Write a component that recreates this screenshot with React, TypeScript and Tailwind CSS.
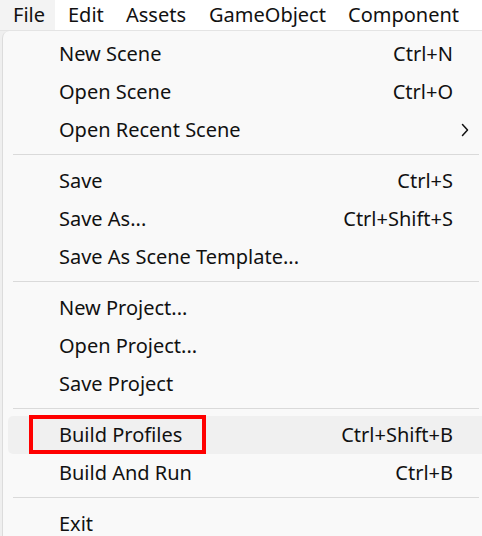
import React from 'react';

type Item =
  | { kind: 'item'; label: string; shortcut?: string; submenu?: boolean; active?: boolean }
  | { kind: 'sep' };

const items: Item[] = [
  { kind: 'item', label: 'New Scene', shortcut: 'Ctrl+N' },
  { kind: 'item', label: 'Open Scene', shortcut: 'Ctrl+O' },
  { kind: 'item', label: 'Open Recent Scene', submenu: true },
  { kind: 'sep' },
  { kind: 'item', label: 'Save', shortcut: 'Ctrl+S' },
  { kind: 'item', label: 'Save As...', shortcut: 'Ctrl+Shift+S' },
  { kind: 'item', label: 'Save As Scene Template...' },
  { kind: 'sep' },
  { kind: 'item', label: 'New Project...' },
  { kind: 'item', label: 'Open Project...' },
  { kind: 'item', label: 'Save Project' },
  { kind: 'sep' },
  { kind: 'item', label: 'Build Profiles', shortcut: 'Ctrl+Shift+B', active: true },
  { kind: 'item', label: 'Build And Run', shortcut: 'Ctrl+B' },
  { kind: 'sep' },
  { kind: 'item', label: 'Exit' },
];

const ChevronRight = () => (
  <svg width="8" height="14" viewBox="0 0 8 14" fill="none">
    <path d="M1.5 1.5 L6.5 7 L1.5 12.5" stroke="#111" strokeWidth="1.5" strokeLinecap="round" strokeLinejoin="round" />
  </svg>
);

const App: React.FC = () => {
  return (
    <div
      className="w-[482px] h-[536px] overflow-hidden bg-[#efefef] text-[#111111]"
      style={{ fontFamily: '"Noto Sans", "Open Sans", sans-serif' }}
    >
      {/* menu bar */}
      <div className="flex h-[31px] items-center bg-white border-b border-[#e4e4e4] text-[20px]">
        <div className="w-[55px] h-full flex items-center pl-[13px] bg-[#f3f3f3]">File</div>
        <div className="w-[58px] h-full flex items-center pl-[13px]">Edit</div>
        <div className="w-[83px] h-full flex items-center pl-[13px]">Assets</div>
        <div className="w-[139px] h-full flex items-center pl-[13px]">GameObject</div>
        <div className="flex-1 h-full flex items-center pl-[13px] whitespace-nowrap">Component</div>
      </div>

      {/* dropdown */}
      <div className="ml-[2px] w-[500px] h-[505px] bg-[#f9f9f9] border-l border-[#dcdcdc] rounded-tl-[7px] pt-[4px] text-[20px]">
        {items.map((it, i) =>
          it.kind === 'sep' ? (
            <div key={i} className="h-[13px] pt-[5px] pl-[10px] pr-[22px]">
              <div className="h-px bg-[#dadada] w-[466px]" />
            </div>
          ) : (
            <div
              key={i}
              className={`relative ml-[5px] w-[474px] h-[38px] flex items-center rounded-l-[5px] ${
                it.active ? 'bg-[#f0f0f0]' : ''
              }`}
            >
              <span className="flex-1 pl-[51px] whitespace-nowrap">{it.label}</span>
              {it.shortcut && <span className="whitespace-nowrap">{it.shortcut}</span>}
              <span className="w-[29px] h-full flex items-center pl-[8px]">{it.submenu && <ChevronRight />}</span>
              {it.active && (
                <div className="absolute left-[21px] top-[-1px] w-[177px] h-[39px] border-[4px] border-[#ff0000]" />
              )}
            </div>
          )
        )}
      </div>
    </div>
  );
};

export default App;
